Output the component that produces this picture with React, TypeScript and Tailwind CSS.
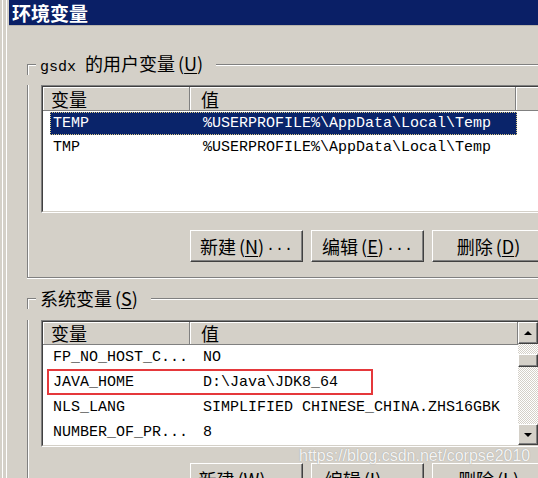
import React from 'react';

const CJK = "font-['Noto_Sans_CJK_SC',sans-serif]";
const MONO = "font-['Liberation_Mono','Noto_Sans_CJK_SC',monospace]";

function Hotkey({ k }: { k: string }) {
  return (
    <span className={CJK + ' ml-[3px]'}>
      (<span className="underline underline-offset-[2px]">{k}</span>)
    </span>
  );
}

function Button({ label, k, dots }: { label: string; k: string; dots?: boolean }) {
  return (
    <div className="w-[113px] h-[32px] shrink-0 bg-[#d4d0c8] border border-t-white border-l-white border-r-[#404040] border-b-[#404040] shadow-[inset_-1px_-1px_#808080] flex items-center justify-center text-[18px] leading-none text-black">
      <span className={CJK}>{label}</span>
      <Hotkey k={k} />
      {dots && <span className={MONO + ' text-[15px] ml-[2px]'}>...</span>}
    </div>
  );
}

function HeaderCell({ className, children }: { className?: string; children?: React.ReactNode }) {
  return (
    <div className={'h-full flex items-center bg-[#d4d0c8] border-r border-b border-[#808080] shadow-[inset_1px_1px_#fff] text-[18px] leading-none text-black ' + CJK + ' ' + (className ?? '')}>
      {children}
    </div>
  );
}

function Row({ name, value, h, selected, marked }: { name: string; value: string; h: string; selected?: boolean; marked?: boolean }) {
  return (
    <div className={'relative flex items-center shrink-0 ' + h}>
      <div
        className={
          'ml-[7px] w-[467px] h-[23px] flex items-center border border-dotted text-[15px] leading-none ' +
          MONO +
          (selected ? ' bg-[#0a246a] text-white border-[#d8c884]' : ' text-black border-transparent')
        }
      >
        <span className="w-[140px] shrink-0 pl-[2px] whitespace-pre">{name}</span>
        <span className="pl-[12px] whitespace-pre">{value}</span>
      </div>
      {marked && (
        <span className="absolute left-[4px] -top-[1px] w-[326px] h-[26px] border-2 border-[#e5383b]" />
      )}
    </div>
  );
}

function Sunken({ className, children }: { className?: string; children: React.ReactNode }) {
  return (
    <div className={'border border-t-[#808080] border-l-[#808080] border-b-white border-r-white ' + (className ?? '')}>
      <div className="h-full border border-t-[#404040] border-l-[#404040] border-b-[#d4d0c8] border-r-[#d4d0c8] bg-white overflow-hidden">
        {children}
      </div>
    </div>
  );
}

function ScrollBtn({ up, className }: { up?: boolean; className: string }) {
  return (
    <div className={'shrink-0 flex items-center justify-center bg-[#d4d0c8] border border-t-white border-l-white border-r-[#404040] border-b-[#404040] shadow-[inset_-1px_-1px_#808080] ' + className}>
      {up ? (
        <div className="w-0 h-0 border-x-[4px] border-x-transparent border-b-[4px] border-b-black" />
      ) : (
        <div className="w-0 h-0 border-x-[4px] border-x-transparent border-t-[4px] border-t-black" />
      )}
    </div>
  );
}

function Group({ label, className, children }: { label: React.ReactNode; className?: string; children: React.ReactNode }) {
  return (
    <div className={'w-[530px] shrink-0 ' + (className ?? '')}>
      <div className="flex h-[21px]">
        <div className="self-end h-[11px] w-[9px] border-t border-l border-[#808080] shadow-[inset_1px_1px_#fff]" />
        <div className="pl-[4px] pr-[13px] flex items-center text-[18px] leading-none text-black">
          <span className="whitespace-pre">{label}</span>
        </div>
        <div className="self-end h-[11px] flex-1 border-t border-[#808080] shadow-[inset_0_1px_#fff]" />
      </div>
      <div className="border-l border-b border-[#808080] shadow-[inset_1px_0_#fff,0_1px_#fff] pb-[15px]">
        {children}
      </div>
    </div>
  );
}

export default function App() {
  return (
    <div className="relative w-[538px] h-[478px] overflow-hidden bg-[#d4d0c8] flex">
      {/* window frame on the left */}
      <div className="w-[9px] shrink-0 px-[2px] flex">
        <div className="w-full border-l border-white border-r border-[#a8a49c]" />
      </div>

      <div className="flex-1 min-w-0 flex flex-col">
        {/* title bar */}
        <div className="h-[26px] shrink-0 bg-[#0a1f66] border-b border-[#b8b4ac] pl-[3px] flex items-center">
          <span className={CJK + ' text-white font-bold text-[19px] leading-none'}>环境变量</span>
        </div>

        <div className="ml-[18px] mt-[28px] flex flex-col">
          {/* user variables */}
          <Group
            label={
              <>
                <span className={MONO + ' text-[15px]'}>{'gsdx '}</span>
                <span className={CJK}>的用户变量</span>
                <Hotkey k="U" />
              </>
            }
          >
            <Sunken className="ml-[13px] mt-[10px] w-[500px] h-[128px]">
              <div className="flex flex-col">
                <div className="flex h-[24px] shrink-0">
                  <HeaderCell className="w-[147px] shrink-0 pl-[8px]">变量</HeaderCell>
                  <HeaderCell className="w-[326px] shrink-0 pl-[11px]">值</HeaderCell>
                  <HeaderCell className="flex-1" />
                </div>
                <Row h="h-[24px]" selected name="TEMP" value={'%USERPROFILE%\\AppData\\Local\\Temp'} />
                <Row h="h-[24px]" name="TMP" value={'%USERPROFILE%\\AppData\\Local\\Temp'} />
              </div>
            </Sunken>
            <div className="ml-[162px] mt-[17px] flex gap-[8px]">
              <Button label="新建" k="N" dots />
              <Button label="编辑" k="E" dots />
              <Button label="删除" k="D" />
            </div>
          </Group>

          {/* system variables */}
          <Group
            className="mt-[10px]"
            label={
              <>
                <span className={CJK}>系统变量</span>
                <Hotkey k="S" />
              </>
            }
          >
            <Sunken className="ml-[13px] mt-[11px] w-[500px] h-[127px]">
              <div className="flex h-full">
                <div className="w-[475px] shrink-0 flex flex-col">
                  <div className="flex h-[23px] shrink-0">
                    <HeaderCell className="w-[147px] shrink-0 pl-[8px]">变量</HeaderCell>
                    <HeaderCell className="flex-1 pl-[11px]">值</HeaderCell>
                  </div>
                  <Row h="h-[25px]" name="FP_NO_HOST_C..." value="NO" />
                  <Row h="h-[25px]" marked name="JAVA_HOME" value={'D:\\Java\\JDK8_64'} />
                  <Row h="h-[25px]" name="NLS_LANG" value="SIMPLIFIED CHINESE_CHINA.ZHS16GBK" />
                  <Row h="h-[25px]" name="NUMBER_OF_PR..." value="8" />
                </div>
                <div className="w-[20px] shrink-0 flex flex-col bg-[image:repeating-conic-gradient(#ffffff_0_25%,#d4d0c8_0_50%)] bg-[length:2px_2px]">
                  <ScrollBtn up className="h-[22px]" />
                  <div className="flex-1">
                    <div className="mt-[10px] h-[13px] bg-[#d4d0c8] border border-t-white border-l-white border-r-[#404040] border-b-[#404040] shadow-[inset_-1px_-1px_#808080]" />
                  </div>
                  <ScrollBtn className="h-[21px]" />
                </div>
              </div>
            </Sunken>
            <div className="ml-[162px] mt-[16px] flex gap-[8px]">
              <Button label="新建" k="W" dots />
              <Button label="编辑" k="I" dots />
              <Button label="删除" k="L" />
            </div>
          </Group>
        </div>
      </div>

      {/* watermark */}
      <span className="absolute left-[299px] top-[448px] font-['Liberation_Sans',sans-serif] text-[16px] leading-none text-white/90 [text-shadow:0_0_1px_#8a8a8a]">
        https://blog.csdn.net/corpse2010
      </span>
    </div>
  );
}
